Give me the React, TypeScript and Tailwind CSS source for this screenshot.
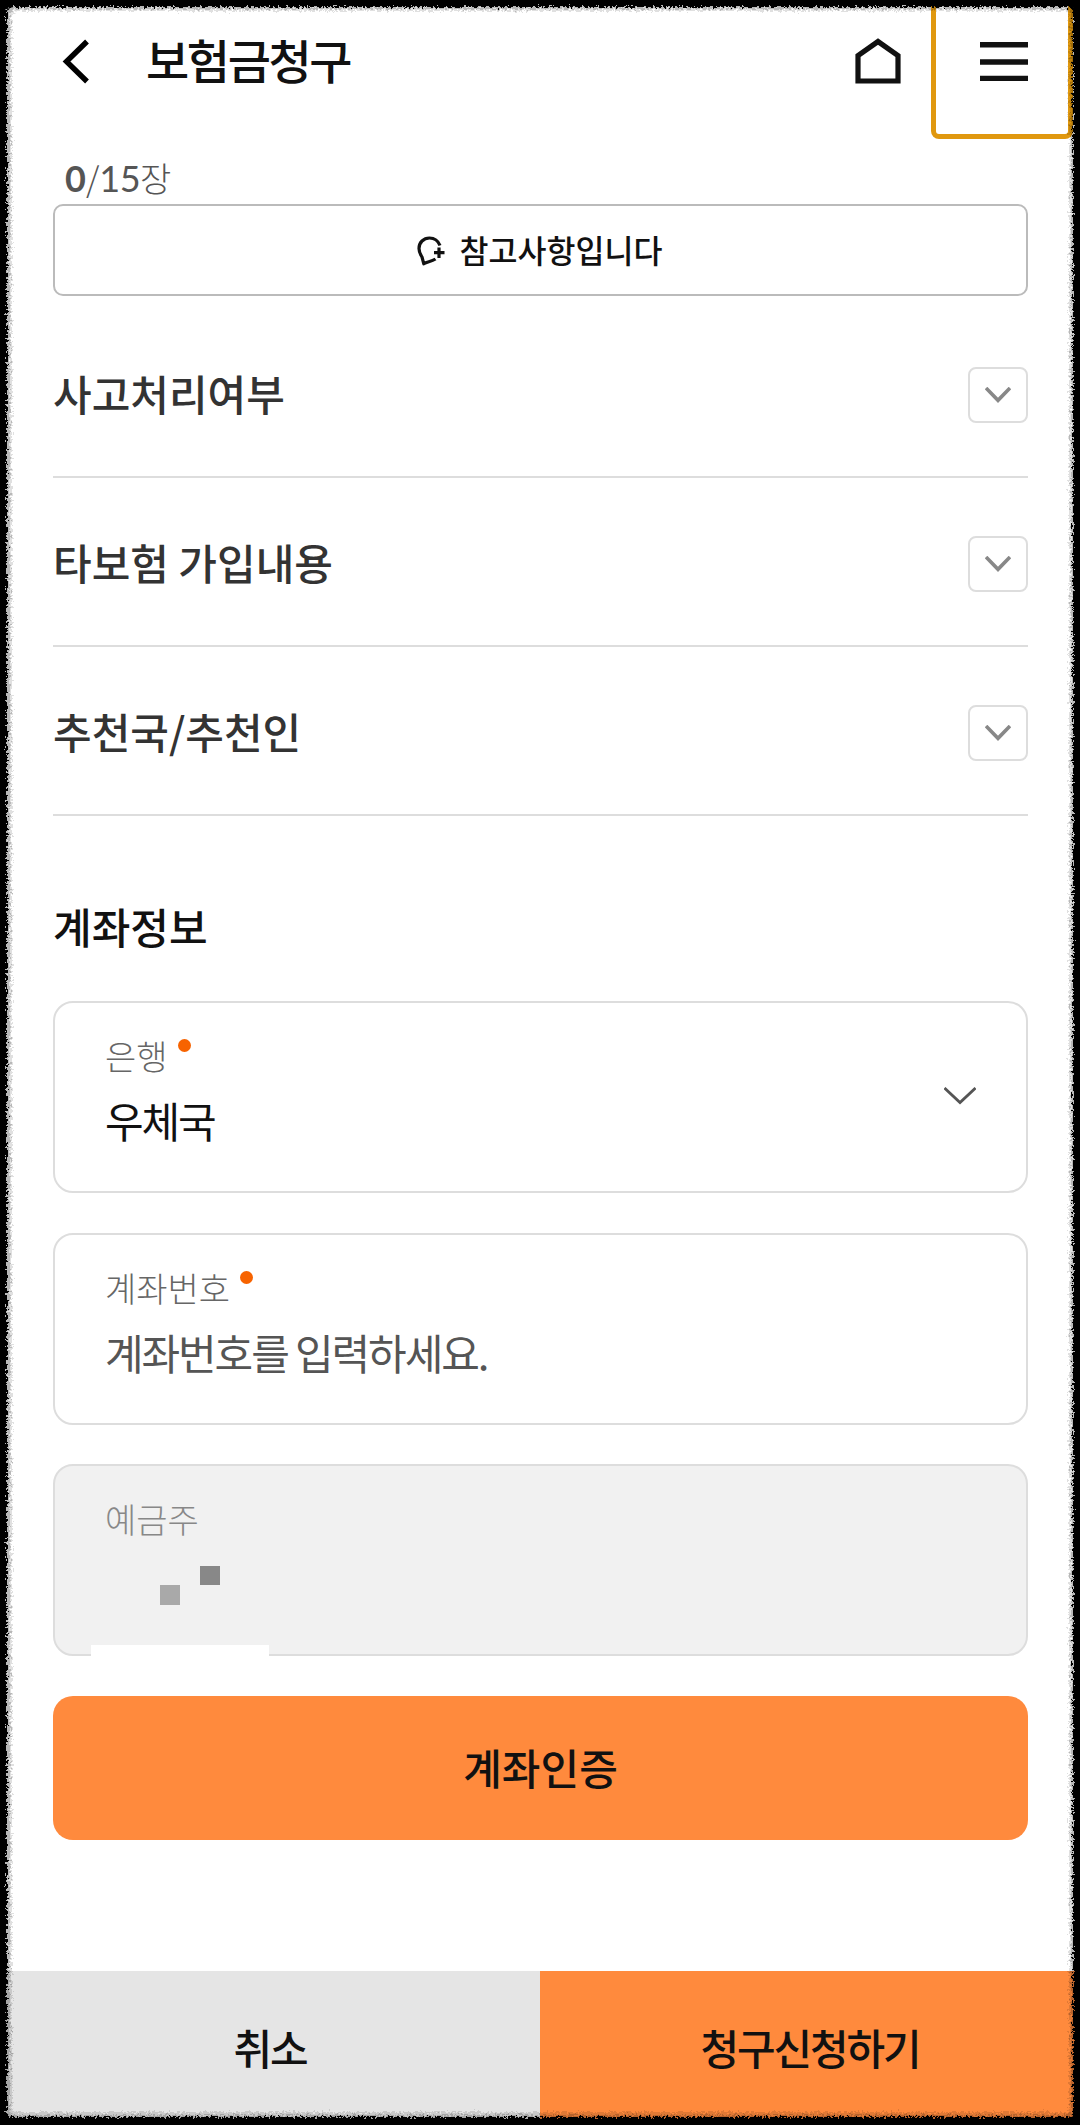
import React from "react";

const sections = ["사고처리여부", "타보험 가입내용", "추천국/추천인"];

function Header() {
  return (
    <header className="flex h-[139px] shrink-0 items-start">
      <svg className="ml-[60px] mt-[36px] h-[50px] w-[32px]" viewBox="0 0 32 50" fill="none" stroke="#000" strokeWidth="5.4">
        <path d="M27 5.5 6.5 25.5 27 45.5" />
      </svg>
      <h1 className="ml-[54px] mt-[24px] text-[47px] font-medium leading-[70px] tracking-[-2.4px] text-[#111]">보험금청구</h1>
      <svg className="ml-auto mr-[30px] mt-[36px] h-[50px] w-[46px]" viewBox="0 0 46 50" fill="none" stroke="#111" strokeWidth="5.2">
        <path d="M3 45V19.5L23 5.5 43 19.5V45Z" />
      </svg>
      <button className="mr-[7px] flex h-[139px] w-[142px] items-start rounded-b-[8px] border-[5px] border-t-0 border-[#e0980f] pl-[44px]">
        <svg className="mt-[41px] h-[40px] w-[48px] shrink-0" viewBox="0 0 48 40" stroke="#111" strokeWidth="5.4">
          <path d="M0 3.7H48M0 21H48M0 37.5H48" />
        </svg>
      </button>
    </header>
  );
}

type FieldProps = {
  label: string;
  value: string;
  valueClass?: string;
  children?: React.ReactNode;
};

function Field({ label, value, valueClass = "text-[#111]", children }: FieldProps) {
  return (
    <div className="flex h-[192px] items-center justify-between rounded-[20px] border-2 border-[#ddd] pl-[50px] pr-[50px]">
      <div className="-mt-[12px]">
        <div className="flex h-[50px] items-start text-[34px] font-light leading-[50px] text-[#666]">
          {label}
          <span className="ml-[10px] mt-[8px] size-[13px] rounded-full bg-[#f76300]" />
        </div>
        <div className={"mt-[8px] h-[62px] text-[42px] leading-[62px] tracking-[-2.1px] " + valueClass}>{value}</div>
      </div>
      {children}
    </div>
  );
}

function RoughFrame() {
  return (
    <svg className="pointer-events-none absolute inset-0 h-[2125px] w-[1080px]" viewBox="0 0 1080 2125">
      <defs>
        <filter id="rough" x="0" y="0" width="1080" height="2125" filterUnits="userSpaceOnUse" colorInterpolationFilters="sRGB">
          <feTurbulence type="fractalNoise" baseFrequency="0.45" numOctaves="2" seed="4" />
          <feDisplacementMap in="SourceGraphic" scale="8" xChannelSelector="R" yChannelSelector="G" />
        </filter>
      </defs>
      <g filter="url(#rough)" fillRule="evenodd">
        <path fill="#000" fillOpacity="0.12" d="M-20-20H1100V2145H-20ZM18 11H1064Q1069 11 1069 16V2108Q1069 2112 1064 2112H18Q12 2112 12 2107V17Q12 11 18 11Z" />
        <path fill="#000" fillOpacity="0.18" d="M-20-20H1100V2145H-20ZM16 9H1066Q1071 9 1071 14V2110Q1071 2115 1066 2115H15Q10 2115 10 2110V15Q10 9 16 9Z" />
        <path fill="#000" d="M-20-20H1100V2145H-20ZM13 7H1068Q1073 7 1073 12V2112Q1073 2117 1068 2117H12Q7 2117 7 2112V13Q7 7 13 7Z" />
      </g>
    </svg>
  );
}

export default function App() {
  return (
    <div className="relative flex h-[2125px] w-[1080px] flex-col overflow-hidden bg-white font-['Noto_Sans_CJK_KR',sans-serif]">
      <Header />
      <main className="flex flex-col pl-[53px] pr-[52px]">
        <div className="mt-[13px] h-[52px] pl-[12px] text-[34px] font-light leading-[51px] text-[#555]">
          <span className="font-['Lato'] text-[36px] font-bold">0</span>/<span className="font-['Lato'] text-[36px] font-normal tracking-[-0.5px]">15</span>장
        </div>
        <button className="flex h-[92px] items-center justify-center rounded-[10px] border-2 border-[#bbb] pr-[2px] text-[31.5px] font-medium text-[#111]">
          <svg className="mr-[15px] mt-[2px] h-[30px] w-[28px]" viewBox="0 0 28 30" fill="none" stroke="#111" strokeWidth="3.2" strokeLinejoin="round">
            <path d="M23 9.5C21 4.500 17 2 12.500 2C6.500 2 2 6.500 2 12.500C2 16.500 3.500 18.500 5 21L6.800 27.800C10 25.500 14 26 18.500 23M22 11.500V22M17 16.700H27.500" />
          </svg>
          참고사항입니다
        </button>
        <div className="mt-[13px]">
          {sections.map((title) => (
            <div key={title} className="flex h-[169px] items-start justify-between border-b-2 border-[#ddd]">
              <h2 className="mt-[53px] text-[42px] font-medium leading-[62px] text-[#333]">{title}</h2>
              <button className="mt-[58px] flex h-[56px] w-[60px] items-center justify-center rounded-[8px] border-2 border-[#ddd]">
                <svg className="h-[16px] w-[26px]" viewBox="0 0 26 16" fill="none" stroke="#888" strokeWidth="3.6">
                  <path d="M1 1 13 13.3 25 1" />
                </svg>
              </button>
            </div>
          ))}
        </div>
        <h2 className="mt-[79px] text-[42px] font-medium leading-[62px] text-[#111]">계좌정보</h2>
        <div className="mt-[44px] flex flex-col gap-[39.5px]">
          <Field label="은행" value="우체국">
            <svg className="-mt-[2px] h-[18px] w-[32px]" viewBox="0 0 32 18" fill="none" stroke="#555" strokeWidth="2.8">
              <path d="M0.500 1 16 15.500 31.500 1" />
            </svg>
          </Field>
          <Field label="계좌번호" value="계좌번호를 입력하세요." valueClass="text-[#555]" />
          <div className="relative h-[192px] rounded-[20px] border-2 border-[#ddd] bg-[#f1f1f1] pl-[50px] pt-[28px]">
            <div className="text-[34px] font-light leading-[50px] text-[#888]">예금주</div>
            <span className="absolute left-[145px] top-[100px] h-[19px] w-[20px] bg-[#888]" />
            <span className="absolute left-[105px] top-[119px] size-[20px] bg-[#a9a9a9]" />
            <span className="absolute -bottom-[2px] left-[36px] h-[11px] w-[178px] bg-white" />
          </div>
        </div>
        <button className="mt-[40px] h-[144px] rounded-[20px] bg-[#ff8a3d] pb-[4px] text-[42px] font-medium text-[#111]">계좌인증</button>
      </main>
      <footer className="mt-auto grid h-[154px] grid-cols-2 text-[42px] font-medium tracking-[-2.1px] text-[#111]">
        <button className="bg-[#e5e5e5] pb-[3px]">취소</button>
        <button className="bg-[#ff8a3d] pb-[3px]">청구신청하기</button>
      </footer>
      <RoughFrame />
    </div>
  );
}
